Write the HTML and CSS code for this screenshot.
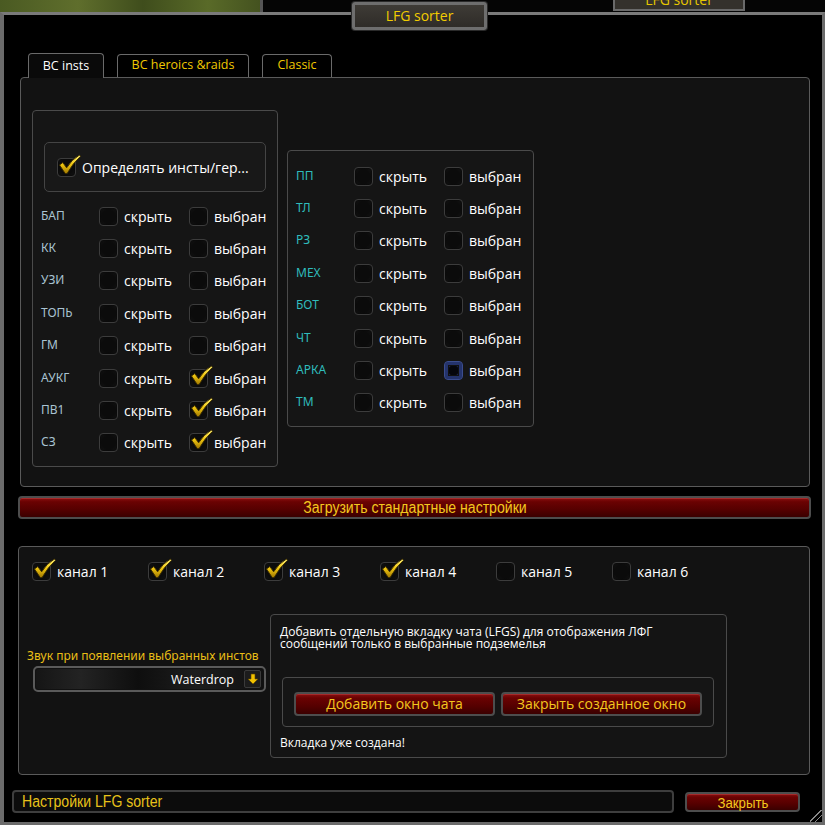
FILE: index.html
```html
<!DOCTYPE html>
<html lang="ru">
<head>
<meta charset="utf-8">
<title>LFG sorter</title>
<link rel="stylesheet" href="styles.css">
</head>
<body>
<svg width="0" height="0" class="defs">
  <defs>
    <linearGradient id="gold" x1="0" y1="0" x2="0" y2="1">
      <stop offset="0" stop-color="#fff27a"/>
      <stop offset="0.5" stop-color="#f2c811"/>
      <stop offset="1" stop-color="#a07800"/>
    </linearGradient>
    <symbol id="tick" viewBox="0 0 24 22">
      <path d="M1.5 11.5 L5 9 L9 14.5 Q14 6 22.5 1 L23.5 2.5 Q15.5 9.5 9.5 20.5 L7.5 20.5 Z" fill="url(#gold)" stroke="#3d2e00" stroke-width="1" stroke-linejoin="round"/>
    </symbol>
  </defs>
</svg>
<div class="top-strip">
  <div class="grass"></div>
  <div class="ghost-tab"><span>LFG sorter</span></div>
</div>
<div class="frame">
  <div class="title">LFG sorter</div>

  <div class="tabs">
    <div class="tab active">BC insts</div>
    <div class="tab">BC heroics &amp;raids</div>
    <div class="tab">Classic</div>
  </div>

  <div class="panel main">
    <div class="box left-box">
      <div class="detect">
        <span class="cb on"><svg class="tick"><use href="#tick"/></svg></span>
        <span class="detect-text">Определять инсты/гер...</span>
      </div>
      <div class="rows">
        <div class="row"><span class="lbl">БАП</span><span class="cb"></span><span class="t w">скрыть</span><span class="cb"></span><span class="t">выбран</span></div>
        <div class="row"><span class="lbl">КК</span><span class="cb"></span><span class="t w">скрыть</span><span class="cb"></span><span class="t">выбран</span></div>
        <div class="row"><span class="lbl">УЗИ</span><span class="cb"></span><span class="t w">скрыть</span><span class="cb"></span><span class="t">выбран</span></div>
        <div class="row"><span class="lbl">ТОПЬ</span><span class="cb"></span><span class="t w">скрыть</span><span class="cb"></span><span class="t">выбран</span></div>
        <div class="row"><span class="lbl">ГМ</span><span class="cb"></span><span class="t w">скрыть</span><span class="cb"></span><span class="t">выбран</span></div>
        <div class="row"><span class="lbl">АУКГ</span><span class="cb"></span><span class="t w">скрыть</span><span class="cb on"><svg class="tick"><use href="#tick"/></svg></span><span class="t">выбран</span></div>
        <div class="row"><span class="lbl">ПВ1</span><span class="cb"></span><span class="t w">скрыть</span><span class="cb on"><svg class="tick"><use href="#tick"/></svg></span><span class="t">выбран</span></div>
        <div class="row"><span class="lbl">СЗ</span><span class="cb"></span><span class="t w">скрыть</span><span class="cb on"><svg class="tick"><use href="#tick"/></svg></span><span class="t">выбран</span></div>
      </div>
    </div>
    <div class="box right-box">
      <div class="rows">
        <div class="row teal"><span class="lbl">ПП</span><span class="cb"></span><span class="t w">скрыть</span><span class="cb"></span><span class="t">выбран</span></div>
        <div class="row teal"><span class="lbl">ТЛ</span><span class="cb"></span><span class="t w">скрыть</span><span class="cb"></span><span class="t">выбран</span></div>
        <div class="row teal"><span class="lbl">РЗ</span><span class="cb"></span><span class="t w">скрыть</span><span class="cb"></span><span class="t">выбран</span></div>
        <div class="row teal"><span class="lbl">МЕХ</span><span class="cb"></span><span class="t w">скрыть</span><span class="cb"></span><span class="t">выбран</span></div>
        <div class="row teal"><span class="lbl">БОТ</span><span class="cb"></span><span class="t w">скрыть</span><span class="cb"></span><span class="t">выбран</span></div>
        <div class="row teal"><span class="lbl">ЧТ</span><span class="cb"></span><span class="t w">скрыть</span><span class="cb"></span><span class="t">выбран</span></div>
        <div class="row teal"><span class="lbl">АРКА</span><span class="cb"></span><span class="t w">скрыть</span><span class="cb hl"></span><span class="t">выбран</span></div>
        <div class="row teal"><span class="lbl">ТМ</span><span class="cb"></span><span class="t w">скрыть</span><span class="cb"></span><span class="t">выбран</span></div>
      </div>
    </div>
  </div>

  <div class="btn red wide"><span class="narrow">Загрузить стандартные настройки</span></div>

  <div class="panel second">
    <div class="channels">
      <div class="chan"><span class="cb on"><svg class="tick"><use href="#tick"/></svg></span><span class="t">канал 1</span></div>
      <div class="chan"><span class="cb on"><svg class="tick"><use href="#tick"/></svg></span><span class="t">канал 2</span></div>
      <div class="chan"><span class="cb on"><svg class="tick"><use href="#tick"/></svg></span><span class="t">канал 3</span></div>
      <div class="chan"><span class="cb on"><svg class="tick"><use href="#tick"/></svg></span><span class="t">канал 4</span></div>
      <div class="chan"><span class="cb"></span><span class="t">канал 5</span></div>
      <div class="chan"><span class="cb"></span><span class="t">канал 6</span></div>
    </div>
    <div class="lower">
      <div class="sound">
        <div class="sound-label">Звук при появлении выбранных инстов</div>
        <div class="dropdown">
          <span class="dd-value">Waterdrop</span>
          <span class="dd-arrow"><svg viewBox="0 0 12 12" width="12" height="12"><path d="M4 1 H8 V6 H11 L6 11 L1 6 H4 Z" fill="#f0c000" stroke="#5a4300" stroke-width="0.6"/></svg></span>
        </div>
      </div>
      <div class="box chat">
        <div class="chat-text">Добавить отдельную вкладку чата (LFGS) для отображения ЛФГ сообщений только в выбранные подземелья</div>
        <div class="box chat-btns">
          <div class="btn red chat-btn">Добавить окно чата</div>
          <div class="btn red chat-btn">Закрыть созданное окно</div>
        </div>
        <div class="chat-status">Вкладка уже создана!</div>
      </div>
    </div>
  </div>

  <div class="bottom">
    <div class="input"><span class="narrow">Настройки LFG sorter</span></div>
    <div class="btn red close"><span class="narrow">Закрыть</span></div>
  </div>
  <div class="grip"></div>
</div>
</body>
</html>
```

FILE: styles.css
```css
html, body {
  margin: 0;
  padding: 0;
  background: #000;
  width: 825px;
  height: 825px;
  overflow: hidden;
  font-family: "Open Sans", "Noto Sans", sans-serif;
  color: #fff;
}

.defs {
  position: absolute;
  width: 0;
  height: 0;
}

.top-strip {
  height: 12px;
  display: flex;
  background: #050505;
  overflow: hidden;
}

.grass {
  width: 263px;
  height: 12px;
  background: linear-gradient(90deg, #4a5a22, #5f6e2c 30%, #3f4d1c 55%, #596a28 80%, #44521f);
  border-right: 3px solid #555;
  box-sizing: border-box;
}

.ghost-tab {
  margin-left: 350px;
  width: 128px;
  height: 9px;
  background: #34312c;
  border: 2px solid #6a6a6a;
  border-top: none;
  color: #e6c600;
  font-size: 14px;
  text-align: center;
  overflow: hidden;
  position: relative;
}

.ghost-tab span {
  position: relative;
  top: -10px;
  line-height: 18px;
}

.frame {
  position: relative;
  height: 813px;
  box-sizing: border-box;
  border-top: 3px solid #7a7a7a;
  border-left: 4px solid #6b6b6b;
  border-right: 3px solid #6b6b6b;
  border-bottom: 3px solid #6b6b6b;
  background: #000;
  display: flex;
  flex-direction: column;
}

.title {
  position: absolute;
  left: 348px;
  top: -13px;
  width: 135px;
  height: 28px;
  box-sizing: border-box;
  background: linear-gradient(#3e3b36, #2f2c28);
  border: 3px solid #6e6e6e;
  border-radius: 3px;
  box-shadow: 0 0 0 1px #2a2a2a;
  color: #f2cd00;
  font-size: 14px;
  line-height: 21px;
  text-align: center;
}

.tabs {
  display: flex;
  align-items: flex-end;
  gap: 13px;
  margin: 37px 0 0 24px;
  height: 25px;
}

.tab {
  height: 23px;
  box-sizing: border-box;
  border: 1px solid #6a6a6a;
  border-bottom: none;
  border-radius: 4px 4px 0 0;
  background: #000;
  color: #f0c800;
  font-size: 12.5px;
  line-height: 20px;
  width: 132px;
  text-align: center;
}

.tab:nth-child(3) {
  width: 70px;
}

.tab.active {
  height: 25px;
  width: 76px;
  color: #fff;
  line-height: 24px;
  background: #0a0a0a;
  position: relative;
  z-index: 1;
  margin-bottom: -1px;
}

.panel {
  box-sizing: border-box;
  border: 1px solid #5a5a5a;
  border-radius: 4px;
  background: #121212;
}

.main {
  margin-left: 16px;
  width: 790px;
  height: 410px;
  display: flex;
  align-items: flex-start;
  padding: 32px 0 0 11px;
  gap: 9px;
}

.box {
  box-sizing: border-box;
  border: 1px solid #4a4a4a;
  border-radius: 4px;
  background: #151515;
}

.left-box {
  width: 246px;
  height: 357px;
  padding: 31px 0 0 0;
}

.detect {
  margin-left: 11px;
  width: 222px;
  height: 50px;
  box-sizing: border-box;
  border: 1px solid #444;
  border-radius: 5px;
  background: #181818;
  display: flex;
  align-items: center;
  padding-left: 12px;
  gap: 6px;
}

.detect-text {
  font-size: 14px;
  color: #fff;
}

.rows {
  display: flex;
  flex-direction: column;
}

.left-box .rows {
  margin-top: 8px;
}

.right-box {
  width: 247px;
  height: 277px;
  margin-top: 40px;
  padding-top: 9px;
}

.row {
  height: 32.4px;
  display: flex;
  align-items: center;
  padding-left: 8px;
}

.lbl {
  width: 58px;
  flex: none;
  font-family: "Noto Sans", sans-serif;
  font-size: 12px;
  color: #a9c3d2;
  position: relative;
  top: -1px;
}

.row.teal .lbl {
  color: #2fbcbc;
}

.t {
  font-size: 14px;
  color: #fff;
  margin-left: 6px;
}

.t.w {
  width: 65px;
  flex: none;
}

.cb {
  position: relative;
  width: 19px;
  height: 19px;
  flex: none;
  box-sizing: border-box;
  border: 1px solid #3c3c3c;
  border-radius: 4px;
  background: radial-gradient(circle at 50% 50%, #0b0b0b 55%, #151515 100%);
  box-shadow: inset 0 0 2px #000;
}

.cb.hl {
  border: 1px solid #3b4d8e;
  background: #233066;
  box-shadow: inset 0 0 0 3px #24336c, inset 0 0 0 4px #111;
}

.cb.hl::after {
  content: "";
  position: absolute;
  left: 4px;
  top: 4px;
  width: 9px;
  height: 9px;
  background: #05060c;
  border-radius: 2px;
}

.tick {
  position: absolute;
  left: 0;
  top: -5px;
  width: 23px;
  height: 21px;
}

.btn {
  box-sizing: border-box;
  border-radius: 4px;
  color: #f4c81e;
  text-align: center;
}

.btn.red {
  border: 2px solid #4d4d4d;
  background: linear-gradient(#8c1010 0%, #6a0202 20%, #560000 60%, #3a0000 100%);
  box-shadow: inset 0 1px 0 #a52a2a;
}

.narrow {
  display: inline-block;
  font-family: "Liberation Sans", sans-serif;
  transform: scaleX(0.88);
  white-space: nowrap;
}

.wide {
  margin: 9px 0 0 14px;
  width: 793px;
  height: 23px;
  font-size: 16px;
  line-height: 19px;
}

.second {
  margin: 27px 0 0 14px;
  width: 792px;
  height: 229px;
}

.channels {
  display: flex;
  margin: 15px 0 0 13px;
}

.chan {
  width: 116px;
  display: flex;
  align-items: center;
}

.lower {
  display: flex;
  align-items: flex-start;
  margin-top: 33px;
}

.sound {
  margin: 35px 0 0 8px;
  width: 236px;
  flex: none;
}

.sound-label {
  font-family: "Noto Sans", sans-serif;
  font-size: 12px;
  color: #e9be16;
  line-height: 14px;
  white-space: nowrap;
}

.dropdown {
  margin: 3px 0 0 6px;
  width: 233px;
  height: 26px;
  box-sizing: border-box;
  border: 2px solid #5a5a5a;
  border-radius: 5px;
  background: linear-gradient(90deg, #151515, #232323 20%, #0e0e0e 45%, #1d1d1d 70%, #101010);
  box-shadow: inset 0 0 0 1px #111;
  display: flex;
  align-items: center;
  justify-content: flex-end;
  padding-right: 3px;
}

.dd-value {
  font-size: 12.5px;
  color: #fff;
  margin-right: 10px;
}

.dd-arrow {
  width: 17px;
  height: 18px;
  box-sizing: border-box;
  border: 1px solid #3a3a3a;
  border-radius: 2px;
  background: #1c1c1c;
  display: flex;
  align-items: center;
  justify-content: center;
}

.chat {
  margin-left: 7px;
  width: 457px;
  height: 144px;
  padding: 11px 0 0 9px;
  background: #141414;
}

.chat-text {
  font-size: 12px;
  line-height: 12px;
  width: 430px;
  color: #fff;
}

.chat-btns {
  margin: 27px 0 0 2px;
  width: 432px;
  height: 50px;
  display: flex;
  align-items: center;
  gap: 6px;
  padding: 4px 0 0 11px;
  background: #151515;
}

.chat-btn {
  width: 201px;
  height: 24px;
  font-size: 14px;
  line-height: 20px;
}

.chat-status {
  margin-top: 7px;
  font-size: 12px;
  color: #fff;
}

.bottom {
  display: flex;
  align-items: center;
  margin: 15px 0 0 8px;
}

.input {
  width: 662px;
  height: 23px;
  box-sizing: border-box;
  border: 2px solid #3e3e3e;
  border-radius: 4px;
  background: #0c0c0c;
  color: #e8c21a;
  font-size: 16px;
  line-height: 19px;
  padding-left: 8px;
}

.input .narrow {
  transform-origin: left center;
}

.close {
  margin-left: 11px;
  width: 115px;
  height: 20px;
  font-size: 15px;
  line-height: 16px;
}

.grip {
  position: absolute;
  right: 0;
  bottom: 0;
  width: 12px;
  height: 12px;
  background: linear-gradient(135deg, transparent 45%, #888 45%, #888 52%, transparent 52%, transparent 68%, #888 68%, #888 75%, transparent 75%);
}
```
